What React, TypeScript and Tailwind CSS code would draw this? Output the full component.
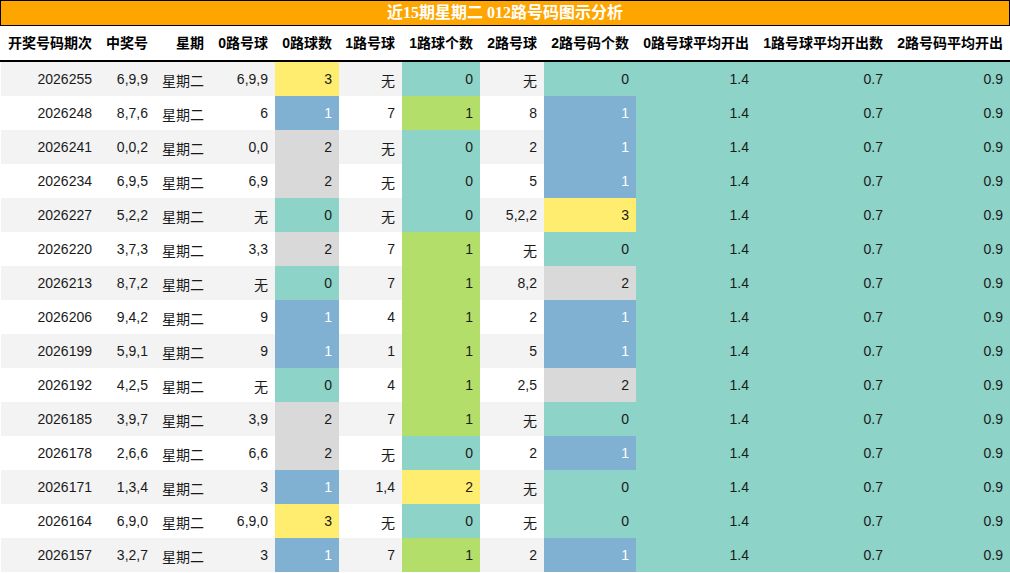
import React from 'react';

type Tone = 'teal' | 'blue' | 'grey' | 'yellow' | 'green';

type Row = {
  issue: string;
  draw: string;
  r0: string;
  c0: number;
  r1: string;
  c1: number;
  r2: string;
  c2: number;
};

const rows: Row[] = [
  { issue: '2026255', draw: '6,9,9', r0: '6,9,9', c0: 3, r1: '无', c1: 0, r2: '无', c2: 0 },
  { issue: '2026248', draw: '8,7,6', r0: '6', c0: 1, r1: '7', c1: 1, r2: '8', c2: 1 },
  { issue: '2026241', draw: '0,0,2', r0: '0,0', c0: 2, r1: '无', c1: 0, r2: '2', c2: 1 },
  { issue: '2026234', draw: '6,9,5', r0: '6,9', c0: 2, r1: '无', c1: 0, r2: '5', c2: 1 },
  { issue: '2026227', draw: '5,2,2', r0: '无', c0: 0, r1: '无', c1: 0, r2: '5,2,2', c2: 3 },
  { issue: '2026220', draw: '3,7,3', r0: '3,3', c0: 2, r1: '7', c1: 1, r2: '无', c2: 0 },
  { issue: '2026213', draw: '8,7,2', r0: '无', c0: 0, r1: '7', c1: 1, r2: '8,2', c2: 2 },
  { issue: '2026206', draw: '9,4,2', r0: '9', c0: 1, r1: '4', c1: 1, r2: '2', c2: 1 },
  { issue: '2026199', draw: '5,9,1', r0: '9', c0: 1, r1: '1', c1: 1, r2: '5', c2: 1 },
  { issue: '2026192', draw: '4,2,5', r0: '无', c0: 0, r1: '4', c1: 1, r2: '2,5', c2: 2 },
  { issue: '2026185', draw: '3,9,7', r0: '3,9', c0: 2, r1: '7', c1: 1, r2: '无', c2: 0 },
  { issue: '2026178', draw: '2,6,6', r0: '6,6', c0: 2, r1: '无', c1: 0, r2: '2', c2: 1 },
  { issue: '2026171', draw: '1,3,4', r0: '3', c0: 1, r1: '1,4', c1: 2, r2: '无', c2: 0 },
  { issue: '2026164', draw: '6,9,0', r0: '6,9,0', c0: 3, r1: '无', c1: 0, r2: '无', c2: 0 },
  { issue: '2026157', draw: '3,2,7', r0: '3', c0: 1, r1: '7', c1: 1, r2: '2', c2: 1 },
];

const headers = [
  '开奖号码期次',
  '中奖号',
  '星期',
  '0路号球',
  '0路球数',
  '1路号球',
  '1路球个数',
  '2路号球',
  '2路号码个数',
  '0路号球平均开出',
  '1路号球平均开出数',
  '2路号码平均开出',
];

const toneClass: Record<Tone, string> = {
  teal: 'bg-[#8dd3c7] text-[#1a1a1a]',
  blue: 'bg-[#80b1d3] text-white',
  grey: 'bg-[#d9d9d9] text-[#1a1a1a]',
  yellow: 'bg-[#ffed6f] text-[#1a1a1a]',
  green: 'bg-[#b3de69] text-[#1a1a1a]',
};

// 0/2 路 columns share a palette, 1 路 column uses its own
const countTone = (n: number): Tone => (['teal', 'blue', 'grey', 'yellow'] as Tone[])[n];
const oneTone = (n: number): Tone => (['teal', 'green', 'yellow'] as Tone[])[n];

const grid =
  'grid grid-cols-[99px_56px_56px_64px_64px_63px_78px_64px_92px_120px_134px_120px]';

function Cell({ children, tone, cjk }: { children: React.ReactNode; tone?: Tone; cjk?: boolean }) {
  return (
    <div
      className={`flex items-center justify-end pr-[7px] h-[34px] ${tone ? toneClass[tone] : ''} ${
        cjk ? 'pt-[4px]' : ''
      }`}
    >
      {children}
    </div>
  );
}

export default function App() {
  return (
    <div
      className="w-[1010px] h-[573px] bg-white text-[#1a1a1a] text-[14px] overflow-hidden"
      style={{ fontFamily: '"Liberation Sans", Arial, "Noto Sans CJK SC", sans-serif' }}
    >
      <div
        className="h-[26px] bg-[#ffa500] border border-black flex items-center justify-center text-white font-bold text-[16px]"
        style={{ fontFamily: '"Liberation Serif", "Noto Sans CJK SC", serif' }}
      >
        近15期星期二 012路号码图示分析
      </div>

      <div className={`${grid} h-[36px] border-b-2 border-black font-bold text-black`}>
        {headers.map((h) => (
          <div key={h} className="flex items-center justify-end pr-[7px]">
            {h}
          </div>
        ))}
      </div>

      <div>
        {rows.map((r, i) => {
          const plain = (text: string) => <Cell cjk={text === '无'}>{text}</Cell>;
          return (
            <div
              key={r.issue}
              className={`${grid} shadow-[inset_1px_0_0_white] ${i % 2 === 0 ? 'bg-[#f3f3f3]' : 'bg-white'}`}
            >
              <Cell>{r.issue}</Cell>
              <Cell>{r.draw}</Cell>
              <Cell cjk>星期二</Cell>
              {plain(r.r0)}
              <Cell tone={countTone(r.c0)}>{r.c0}</Cell>
              {plain(r.r1)}
              <Cell tone={oneTone(r.c1)}>{r.c1}</Cell>
              {plain(r.r2)}
              <Cell tone={countTone(r.c2)}>{r.c2}</Cell>
              <Cell tone="teal">1.4</Cell>
              <Cell tone="teal">0.7</Cell>
              <Cell tone="teal">0.9</Cell>
            </div>
          );
        })}
      </div>
    </div>
  );
}
